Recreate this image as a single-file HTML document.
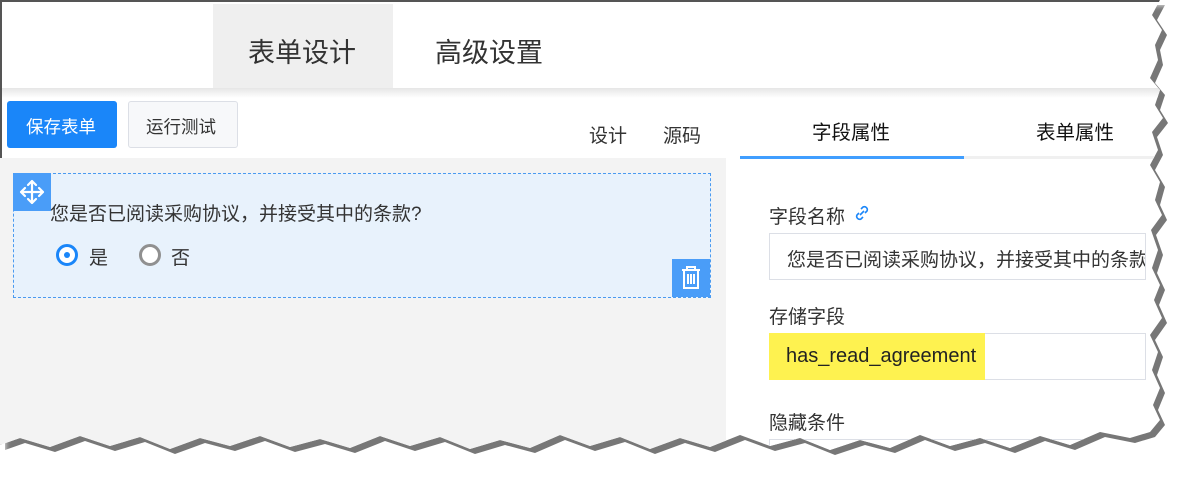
<!DOCTYPE html>
<html><head><meta charset="utf-8"><style>
*{margin:0;padding:0;box-sizing:border-box}
body{width:1192px;height:482px;background:#fff;position:relative;overflow:hidden;font-family:"Liberation Sans","Noto Sans CJK SC",sans-serif;color:#333}
#shadow{position:absolute;left:0;top:0;width:1192px;height:482px;background:#555;filter:blur(3px);transform:translate(5px,5px);opacity:.8}
#page{position:absolute;left:0;top:0;width:1192px;height:482px;background:#fff;border-left:2px solid #555;border-top:2px solid #555}
.clip{clip-path:polygon(0 0,1160px 0,1152px 15px,1162px 30px,1155px 45px,1158px 60px,1150px 78px,1160px 90px,1155px 105px,1163px 118px,1152px 132px,1158px 150px,1150px 165px,1160px 182px,1155px 200px,1162px 215px,1151px 230px,1158px 250px,1152px 268px,1160px 285px,1154px 300px,1162px 318px,1150px 335px,1158px 352px,1152px 370px,1160px 388px,1153px 405px,1160px 420px,1150px 432px,1130px 438px,1100px 432px,1070px 445px,1040px 436px,1010px 448px,980px 438px,950px 446px,920px 435px,890px 448px,860px 440px,830px 450px,800px 438px,770px 446px,740px 435px,710px 447px,680px 438px,650px 449px,620px 437px,590px 446px,560px 435px,530px 448px,500px 440px,470px 449px,440px 437px,410px 446px,380px 436px,350px 448px,320px 439px,290px 447px,260px 436px,230px 446px,200px 438px,170px 449px,140px 437px,110px 446px,80px 436px,50px 447px,20px 438px,0 445px)}
.abs{position:absolute}
.t{white-space:nowrap}
</style></head><body>
<div id="shadow" class="clip"></div>
<div id="page" class="clip">
 <div class="abs" style="left:0;top:86px;width:1192px;height:10px;background:linear-gradient(#e6e6e6,#fff)"></div>
 <div class="abs" style="left:211px;top:2px;width:180px;height:84px;background:#efefef"></div>
 <div class="abs t" style="left:246px;top:29px;font-size:27px;color:#333">表单设计</div>
 <div class="abs t" style="left:433px;top:29px;font-size:27px;color:#333">高级设置</div>
 <div class="abs" style="left:5px;top:99px;width:110px;height:47px;background:#1a86f9;border-radius:3px"></div>
 <div class="abs t" style="left:24px;top:112px;font-size:17.5px;color:#fff">保存表单</div>
 <div class="abs" style="left:126px;top:99px;width:110px;height:47px;background:#f7f8fa;border:1px solid #dcdfe6;border-radius:3px"></div>
 <div class="abs t" style="left:144px;top:112px;font-size:17.5px;color:#333">运行测试</div>
 <div class="abs t" style="left:587px;top:119px;font-size:19px;color:#333">设计</div>
 <div class="abs t" style="left:661px;top:119px;font-size:19px;color:#333">源码</div>
 <div class="abs t" style="left:810px;top:114px;font-size:19.5px;color:#111">字段属性</div>
 <div class="abs t" style="left:1034px;top:114px;font-size:19.5px;color:#111">表单属性</div>
 <div class="abs" style="left:738px;top:154px;width:425px;height:3px;background:#f0f0f0"></div>
 <div class="abs" style="left:738px;top:154px;width:224px;height:3px;background:#409eff"></div>
 <div class="abs" style="left:-2px;top:156px;width:726px;height:330px;background:#f3f3f3"></div>
 <div class="abs" style="left:11px;top:171px;width:698px;height:125px;background:#e8f2fc;border:1px dashed #4a9af0"></div>
 <div class="abs" style="left:11px;top:171px;width:38px;height:38px;background:#4a9df8">
  <svg width="38" height="38" viewBox="0 0 38 38" fill="none" stroke="#fff" stroke-width="2.2" stroke-linecap="round" stroke-linejoin="round"><path d="M19 8v22M8 19h22M15 12l4-4 4 4M15 26l4 4 4-4M12 15l-4 4 4 4M26 15l4 4-4 4"/></svg>
 </div>
 <div class="abs t" style="left:48px;top:197px;font-size:19px;color:#333">您是否已阅读采购协议，并接受其中的条款?</div>
 <div class="abs" style="left:54px;top:242px;width:22px;height:22px;border-radius:50%;border:3px solid #1a86f9;background:#fff"><div style="position:absolute;left:5px;top:5px;width:6px;height:6px;border-radius:50%;background:#1a86f9"></div></div>
 <div class="abs t" style="left:87px;top:241px;font-size:19px">是</div>
 <div class="abs" style="left:137px;top:242px;width:22px;height:22px;border-radius:50%;border:3px solid #909090;background:#fff"></div>
 <div class="abs t" style="left:169px;top:241px;font-size:19px">否</div>
 <div class="abs" style="left:670px;top:257px;width:38px;height:38px;background:#4a9df8">
  <svg width="38" height="38" viewBox="0 0 38 38" fill="none" stroke="#fff" stroke-width="2"><path d="M10 11h18M15 11V8h8v3M12 11v18h14V11M16 15v10M19 15v10M22 15v10"/></svg>
 </div>
 <div class="abs t" style="left:767px;top:200px;font-size:19px">字段名称</div>
 <svg class="abs" style="left:850px;top:201px" width="20" height="20" viewBox="0 0 20 20" fill="none" stroke="#1a86f9" stroke-width="1.6"><path d="M8 12l4-4M9 6l2-2a3 3 0 014 4l-2 2M11 14l-2 2a3 3 0 01-4-4l2-2"/></svg>
 <div class="abs" style="left:767px;top:231px;width:377px;height:47px;border:1px solid #dcdfe6;background:#fff;overflow:hidden"><div class="t" style="position:absolute;left:17px;top:11px;font-size:19px">您是否已阅读采购协议，并接受其中的条款?</div></div>
 <div class="abs t" style="left:767px;top:300px;font-size:19px">存储字段</div>
 <div class="abs" style="left:767px;top:331px;width:377px;height:47px;border:1px solid #dcdfe6;background:#fff"></div>
 <div class="abs" style="left:767px;top:331px;width:216px;height:47px;background:#fef250"></div>
 <div class="abs t" style="left:784px;top:343px;font-size:20px;color:#222">has_read_agreement</div>
 <div class="abs t" style="left:767px;top:406px;font-size:19px">隐藏条件</div>
 <div class="abs" style="left:767px;top:437px;width:377px;height:47px;border:1px solid #dcdfe6;background:#fff"></div>
</div>
</body></html>
